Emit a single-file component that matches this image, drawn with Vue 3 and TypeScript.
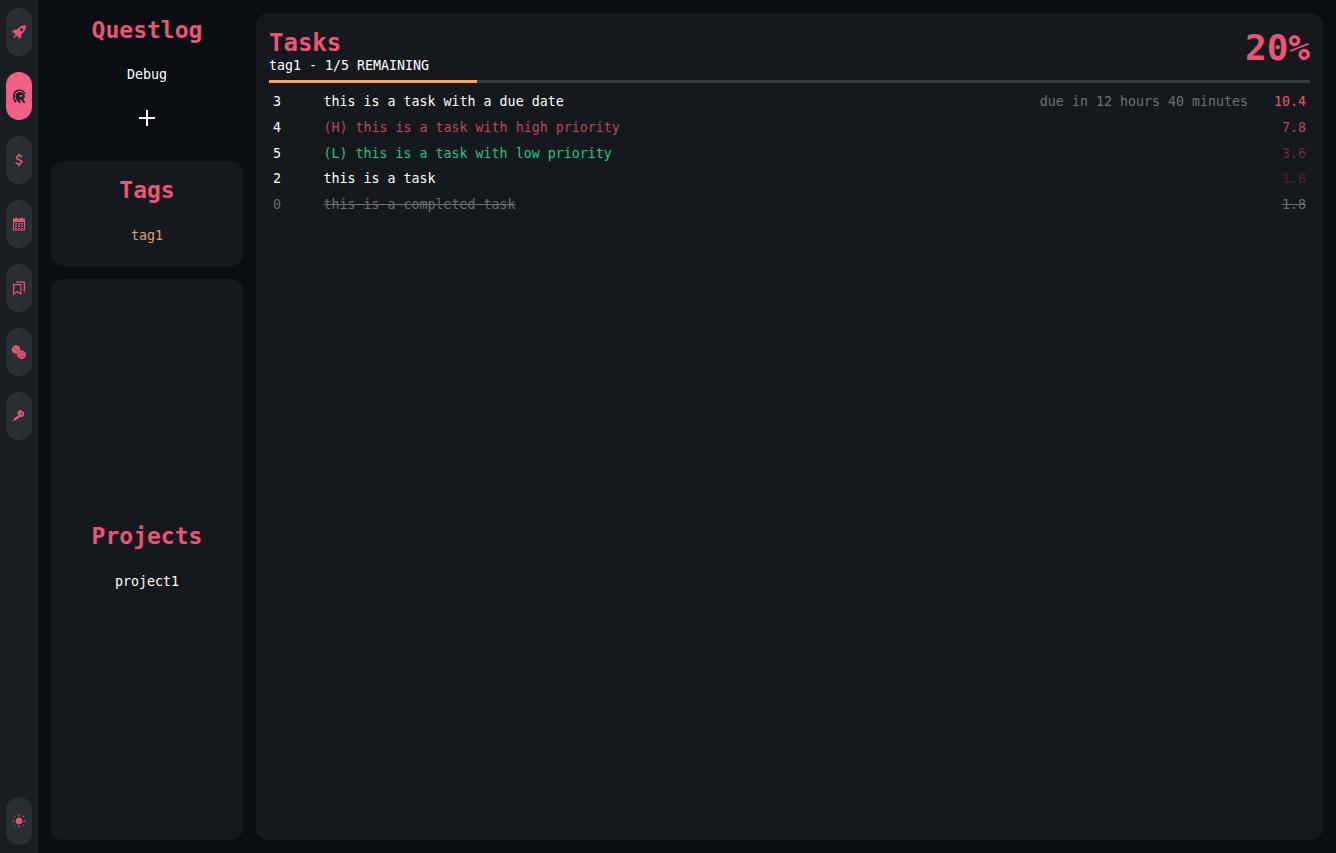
<script setup lang="ts">
interface Task {
  id: number
  text: string
  kind: 'normal' | 'high' | 'low' | 'done'
  due?: string
  urgency: string
  urgencyColor: string
}

const tasks: Task[] = [
  { id: 3, text: 'this is a task with a due date', kind: 'normal', due: 'due in 12 hours 40 minutes', urgency: '10.4', urgencyColor: '#ea5577' },
  { id: 4, text: '(H) this is a task with high priority', kind: 'high', urgency: '7.8', urgencyColor: '#bb4560' },
  { id: 5, text: '(L) this is a task with low priority', kind: 'low', urgency: '3.6', urgencyColor: '#6a2a3a' },
  { id: 2, text: 'this is a task', kind: 'normal', urgency: '1.8', urgencyColor: '#47252f' },
  { id: 0, text: 'this is a completed task', kind: 'done', urgency: '1.8', urgencyColor: '#6b6e72' },
]

const navIcons = ['rocket', 'helmet', 'dollar', 'calendar', 'books', 'dice', 'key']
</script>

<template>
  <div class="app">
    <nav class="rail">
      <button v-for="name in navIcons" :key="name" :class="['pill', { 'pill--active': name === 'helmet' }]">
        <svg class="icon" viewBox="0 0 16 16" fill="currentColor">
          <template v-if="name === 'rocket'">
            <path fill-rule="evenodd" d="M15 1c-3.700.2-6.800 1.700-9 4.600L2.900 5.700 1 8.300l3 .6-.5 1.100 2.500 2.500 1.100-.5.600 3 2.600-1.900.1-3.100C13.300 8.800 14.800 4.700 15 1zM10.500 7.300a1.600 1.600 0 1 1 0-3.200 1.600 1.600 0 0 1 0 3.200z" />
            <path d="M3.300 10.800 5.200 12.700 2.400 14z" />
          </template>
          <template v-else-if="name === 'helmet'">
            <path d="M8.500 1.500C4.700 1.500 2 4.300 2 8c0 2.600.8 4.700 2.300 6.800l1.200-1C4.300 12 3.600 10.200 3.600 8c0-2.900 2.100-5 4.900-5 2.200 0 4 1.200 4.700 3.100l1.300-.5C13.700 3.200 11.400 1.500 8.500 1.500z" />
            <path fill-rule="evenodd" d="M8.600 4C6.200 4 4.500 5.800 4.500 8c0 2.200 1 4 2.300 5.500l1.500 1.300H10l-1.400-2.600 1.100-1.200L12.300 15h2l-2.100-4.600 1.600-1.100V7.700C13 5.400 11 4 8.600 4zm.3 3 2.900.3-.1 1-2.400.8-.9-.7z" />
          </template>
          <template v-else-if="name === 'dollar'">
            <path transform="translate(.7 .7) scale(.91)" d="M7.100 1h1.800v1.600c1.200.1 2.300.5 3.100 1l-.8 1.600c-.9-.5-1.900-.9-3-.9-1.200 0-1.900.5-1.900 1.100 0 .7.800 1.100 2.100 1.400 2 .5 3.300 1.300 3.300 3.100 0 1.600-1.200 2.700-2.800 3v1.600H7.100v-1.500c-1.400-.1-2.600-.6-3.400-1.300l.8-1.600c1 .7 2.100 1.200 3.300 1.200 1.300 0 2.100-.5 2.100-1.200 0-.8-.8-1.200-2.100-1.500-2-.5-3.200-1.300-3.200-3 0-1.600 1-2.700 2.500-3z" />
          </template>
          <template v-else-if="name === 'calendar'">
            <path fill-rule="evenodd" d="M2 2.500h2.500V1.500H6v1h4v-1h1.500v1H14v12H2zM3 6v7.500h10V6zm1 1h2v1.500H4zm3 0h2v1.500H7zm3 0h2v1.500h-2zM4 9.500h2V11H4zm3 0h2V11H7zm3 0h2V11h-2zM4 12h2v1H4zm3 0h2v1H7zm3 0h2v1h-2z" />
          </template>
          <template v-else-if="name === 'books'">
            <path fill-rule="evenodd" d="M2 4h8.500v11L6.250 12.500 2 15zm1.200 1.200v7.700l3.050-1.800 3.050 1.800V5.200z" />
            <path d="M5 1.500h9v10h-1.300V2.800H5z" />
          </template>
          <template v-else-if="name === 'dice'">
            <path fill-rule="evenodd" d="M5 1.200a4.300 4.300 0 1 1 0 8.600 4.300 4.300 0 0 1 0-8.600zM3.600 3.700a.6.600 0 1 0 0 1.200.6.600 0 0 0 0-1.200zm2.800 2.400a.6.600 0 1 0 0 1.200.6.600 0 0 0 0-1.200z" />
            <path fill-rule="evenodd" d="M10.500 6.400a4.300 4.300 0 1 1 0 8.600 4.300 4.300 0 0 1 0-8.600zm-1.400 2a.6.600 0 1 0 0 1.200.6.600 0 0 0 0-1.200zm2.800 0a.6.600 0 1 0 0 1.200.6.600 0 0 0 0-1.200zm-2.800 3.200a.6.600 0 1 0 0 1.200.6.600 0 0 0 0-1.200zm2.800 0a.6.600 0 1 0 0 1.200.6.600 0 0 0 0-1.200z" />
          </template>
          <template v-else-if="name === 'key'">
            <path transform="translate(1 .8) scale(.85)" fill-rule="evenodd" d="M10.800 2.500a3.700 3.700 0 1 1-1.500 7.100L4.300 13.300l-2 1.200-.8-1 .9-2 5-3.900a3.700 3.700 0 0 1 3.400-6.100zm.6 2a1.200 1.200 0 1 0 0 2.400 1.200 1.200 0 0 0 0-2.400z" />
          </template>
        </svg>
      </button>
      <button class="pill pill--bottom">
        <svg class="icon" viewBox="0 0 16 16" fill="currentColor">
          <circle cx="8" cy="8" r="3.200" />
          <path d="M7.200 1.500h1.600v2H7.200zM7.200 12.500h1.600v2H7.200zM1.500 7.200h2v1.600h-2zM12.500 7.200h2v1.600h-2zM3 3h1.300v1.300H3zM11.700 3H13v1.300h-1.300zM3 11.700h1.300V13H3zM11.700 11.700H13V13h-1.300z" opacity=".7" />
        </svg>
      </button>
    </nav>

    <aside class="sidebar">
      <header class="brand">
        <h1 class="title">Questlog</h1>
        <div class="brand-name">Debug</div>
        <svg class="plus" viewBox="0 0 16 16" width="16" height="16">
          <path d="M0 7h16v2H0zM7 0h2v16H7z" fill="#fff" />
        </svg>
      </header>
      <section class="card">
        <h2 class="title">Tags</h2>
        <div class="tag">tag1</div>
      </section>
      <section class="card card--projects">
        <h2 class="title">Projects</h2>
        <div class="project">project1</div>
      </section>
    </aside>

    <main class="main">
      <div class="head">
        <div>
          <h2 class="title title--left">Tasks</h2>
          <div class="subtitle">tag1 - 1/5 REMAINING</div>
        </div>
        <div class="percent">20%</div>
      </div>
      <div class="progress"><div class="progress-fill" :style="{ width: '20%' }"></div></div>
      <div class="tasks">
        <div v-for="task in tasks" :key="task.id" :class="['task', `task--${task.kind}`]">
          <span class="task-id">{{ task.id }}</span>
          <span class="task-text">{{ task.text }}</span>
          <span class="task-due">{{ task.due }}</span>
          <span class="task-urgency" :style="{ color: task.urgencyColor }">{{ task.urgency }}</span>
        </div>
      </div>
    </main>
  </div>
</template>

<style>
html,
body {
  margin: 0;
  background: #0a0d12;
}
</style>

<style scoped>
.app {
  display: flex;
  height: 853px;
  overflow: hidden;
  background: #0a0d12;
  color: #fff;
  font-family: "DejaVu Sans Mono", "Liberation Mono", monospace;
  font-size: 13.3px;
}

.rail {
  width: 38px;
  flex: none;
  box-sizing: border-box;
  padding: 8px 6px;
  display: flex;
  flex-direction: column;
  gap: 16px;
  background: #1a1d22;
}

.pill {
  flex: none;
  width: 26px;
  height: 48px;
  padding: 0;
  border: 0;
  border-radius: 13px;
  display: flex;
  align-items: center;
  justify-content: center;
  background: #2a2d32;
  color: #e4557a;
}

.pill--active {
  background: #ef5f86;
  color: #1a1d22;
}

.pill--bottom {
  margin-top: auto;
}

.icon {
  width: 16px;
  height: 16px;
}

.sidebar {
  width: 192px;
  flex: none;
  margin: 13px;
  display: flex;
  flex-direction: column;
  gap: 13px;
}

.title {
  margin: 0;
  color: #ea5577;
  font-size: 23px;
  font-weight: 700;
  line-height: 30px;
  text-align: center;
}

.title--left {
  text-align: left;
  font-size: 24px;
}

.brand {
  height: 135px;
  padding-top: 2px;
  box-sizing: border-box;
  display: flex;
  flex-direction: column;
  align-items: center;
}

.brand-name {
  margin-top: 21px;
  line-height: 18px;
}

.plus {
  margin-top: 26px;
}

.card {
  height: 105px;
  flex: none;
  box-sizing: border-box;
  padding-bottom: 7px;
  background: #15181d;
  border-radius: 12px;
  display: flex;
  flex-direction: column;
  align-items: center;
  justify-content: center;
}

.card--projects {
  flex: 1;
}

.tag {
  margin-top: 22px;
  line-height: 18px;
  color: #dba275;
}

.project {
  margin-top: 22px;
  line-height: 18px;
  color: #fff;
}

.main {
  flex: 1;
  margin: 13px 13px 13px 0;
  padding: 15px 13px 0;
  background: #15181d;
  border-radius: 12px;
}

.head {
  display: flex;
  justify-content: space-between;
  height: 52px;
}

.subtitle {
  line-height: 16px;
  color: #fff;
}

.percent {
  font-size: 36px;
  font-weight: 700;
  line-height: 40px;
  color: #ea5577;
}

.progress {
  height: 3px;
  background: #3a3c40;
}

.progress-fill {
  height: 100%;
  background: #ffa05f;
}

.tasks {
  margin-top: 6px;
  padding: 0 4px;
}

.task {
  display: flex;
  align-items: center;
  height: 25.7px;
}

.task-id {
  width: 50.5px;
  flex: none;
}

.task-text {
  flex: 1;
}

.task-due {
  color: #6f7276;
}

.task-urgency {
  width: 58px;
  flex: none;
  text-align: right;
}

.task--high .task-text {
  color: #bb4560;
}

.task--low .task-text {
  color: #24c581;
}

.task--done .task-id,
.task--done .task-text {
  color: #6b6e72;
}

.task--done .task-text,
.task--done .task-urgency {
  text-decoration: line-through;
}
</style>
